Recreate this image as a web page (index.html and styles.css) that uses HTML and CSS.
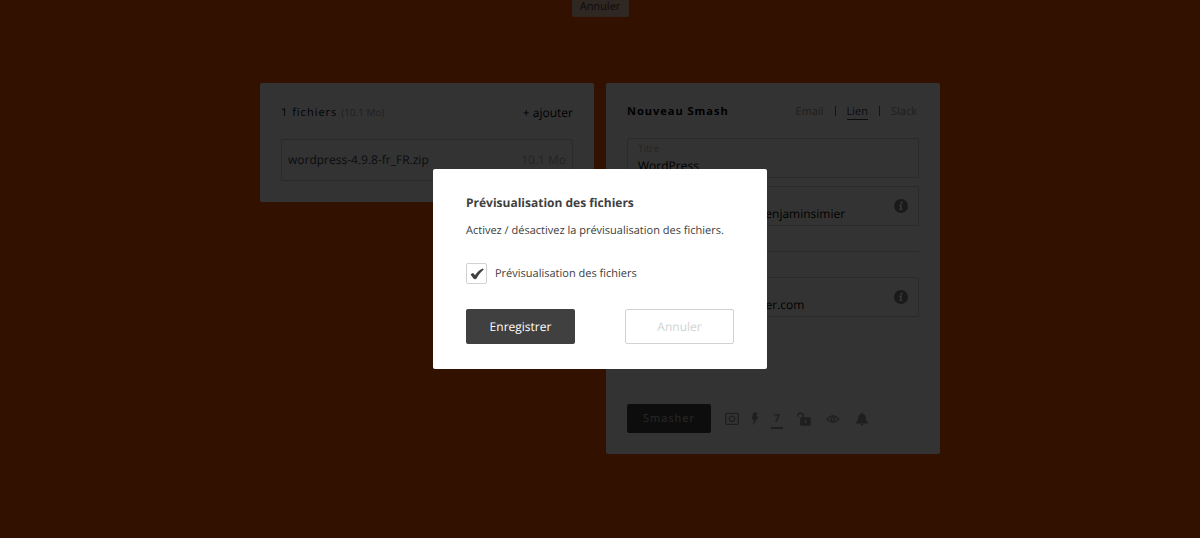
FILE: index.html
```html
<!DOCTYPE html>
<html lang="fr">
<head>
<meta charset="utf-8">
<title>Nouveau Smash</title>
<link rel="stylesheet" href="styles.css">
</head>
<body>
<div class="page">
  <header class="topbar"><button class="cancel-tab" type="button">Annuler</button></header>
  <main class="columns">
    <section class="card">
      <div class="card-head">
        <h2 class="files-title">1 fichiers <small class="files-size">(10.1 Mo)</small></h2>
        <button class="add" type="button">+ ajouter</button>
      </div>
      <div class="file"><span>wordpress-4.9.8-fr_FR.zip</span><span class="file-size">10.1 Mo</span></div>
    </section>
    <section class="card">
      <div class="card-head">
        <h2 class="smash-title">Nouveau Smash</h2>
        <nav class="tabs"><a class="tab" href="#email">Email</a><a class="tab" href="#lien"><span class="tab-active">Lien</span></a><a class="tab" href="#slack">Slack</a></nav>
      </div>
      <form class="fields">
        <div class="field">
          <div class="field-text"><label for="titre">Titre</label><input id="titre" type="text" value="WordPress"></div>
        </div>
        <div class="field">
          <div class="field-text"><label for="lien">Lien</label><input id="lien" type="text" value="app.fromsmash.com/benjaminsimier"></div>
          <svg class="info" viewBox="0 0 14 14"><circle cx="7" cy="7" r="7" fill="#808080"/><circle cx="7.500" cy="3.700" r="1.200" fill="#fff"/><path d="M5.200 5.600h3L7.500 9.800h1v1.300H5l.2-1.300h.5L6.200 6.900h-1z" fill="#fff"/></svg>
        </div>
        <hr class="rule">
        <div class="field">
          <div class="field-text"><label for="mail">Email</label><input id="mail" type="text" value="contact@benjaminsimier.com"></div>
          <svg class="info" viewBox="0 0 14 14"><circle cx="7" cy="7" r="7" fill="#808080"/><circle cx="7.500" cy="3.700" r="1.200" fill="#fff"/><path d="M5.200 5.600h3L7.500 9.800h1v1.300H5l.2-1.300h.5L6.200 6.900h-1z" fill="#fff"/></svg>
        </div>
      </form>
      <div class="actions">
        <button class="smasher" type="button">Smasher</button>
        <div class="tools">
          <button class="tool" type="button" aria-label="Image"><svg width="14" height="14" viewBox="0 0 14 14" fill="none" stroke="currentColor" stroke-width="1.300"><rect x=".7" y="1.300" width="12.600" height="11" rx="1.200"/><circle cx="7" cy="6.800" r="2.700"/></svg></button>
          <button class="tool" type="button" aria-label="Promotion"><svg width="8" height="14" viewBox="0 0 8 14" fill="currentColor"><path d="M2.400.5h4.200L5 4.600h2.700L1.700 13.800l1.200-6.300H.5z"/></svg></button>
          <button class="tool days" type="button">7</button>
        </div>
        <div class="tools tools-wide">
          <button class="tool" type="button" aria-label="Mot de passe"><svg width="14" height="14" viewBox="0 0 14 14" fill="none"><path d="M.9 4.800V3.500a2.600 2.600 0 0 1 5.200 0V6" stroke="currentColor" stroke-width="1.500"/><rect x="3.200" y="5.300" width="10.600" height="8.500" rx="1.200" fill="currentColor"/><path d="M8.500 7.800v3.500" stroke="#fff" stroke-width="1.300"/></svg></button>
          <button class="tool" type="button" aria-label="Prévisualisation"><svg width="14" height="14" viewBox="0 0 14 14" fill="none" stroke="currentColor"><path d="M.9 7q6.100-6.800 12.200 0q-6.100 6.800-12.200 0z" stroke-width="1.200"/><circle cx="7" cy="7" r="2.100" stroke-width="1.200"/><circle cx="7.200" cy="6.500" r=".4"/></svg></button>
          <button class="tool" type="button" aria-label="Notifications"><svg width="14" height="14" viewBox="0 0 14 14" fill="currentColor"><path d="M6.300.5h1.400v1C10 2 10.800 4 10.900 6c.1 2.500.9 3.600 2.300 4.600v.8H.8v-.8C2.200 9.600 3 8.500 3.100 6 3.200 4 4 2 6.300 1.500zM5.500 12.100h3a1.500 1.500 0 0 1-3 0z"/></svg></button>
        </div>
      </div>
    </section>
  </main>
</div>
<div class="overlay">
  <form class="modal" role="dialog" aria-labelledby="dlg-title">
    <h1 id="dlg-title" class="modal-title">Prévisualisation des fichiers</h1>
    <p class="modal-text">Activez / désactivez la prévisualisation des fichiers.</p>
    <div class="option">
      <span class="check"><input id="preview" type="checkbox" checked><svg width="14" height="14" viewBox="0 0 14 14"><path d="M.8 7.900C.8 6.400 3.200 5.700 3.900 6.700l1.100 1.600C7 5.400 9.300 2.900 12.700 1.500l1.100 1.100C10.700 5 8.600 8.100 6.700 11.300c-.7 1.100-2.200 1.200-2.900.5C2.700 10.500 2.200 9 .8 7.900z" fill="#404040"/></svg></span>
      <label for="preview">Prévisualisation des fichiers</label>
    </div>
    <div class="modal-actions">
      <button class="btn btn-dark" type="button">Enregistrer</button>
      <button class="btn btn-light" type="button">Annuler</button>
    </div>
  </form>
</div>
</body>
</html>
```
FILE: styles.css
```css
* { box-sizing: border-box; }
body { margin: 0; min-height: 100vh; background: #ff5500; color: #404040; font: 12px/20px "Open Sans", "Noto Sans", sans-serif; text-rendering: geometricPrecision; }
button, input { font: inherit; color: inherit; border: 0; padding: 0; background: none; text-rendering: inherit; }
button { cursor: pointer; }
h1, h2, p { margin: 0; }

.topbar { height: 83px; display: flex; justify-content: center; align-items: flex-start; }
.cancel-tab { width: 57px; height: 25px; margin-top: -8px; padding-top: 5px; border-radius: 2px; background: #e6c3aa; font-size: 11px; line-height: 20px; }
.columns { display: flex; justify-content: center; align-items: flex-start; gap: 12px; }
.card { width: 334px; padding: 19px 21px 21px; background: #fff; border-radius: 2px; }
.card-head { display: flex; justify-content: space-between; align-items: center; margin-bottom: 16px; color: #000; }
.files-title { font-size: 11px; font-weight: 400; letter-spacing: 1px; }
.files-size { font-size: 10px; letter-spacing: 0; color: #a0a0a0; }
.add { font-size: 12px; }
.file { display: flex; justify-content: space-between; align-items: center; height: 42px; padding: 0 6px; border: 1px solid #d2d2d2; border-radius: 2px; }
.file-size { color: #b4b4b4; }
.smash-title { font-size: 11px; font-weight: 700; letter-spacing: 1px; }
.tabs { display: flex; padding-right: 2px; font-size: 11px; line-height: 14px; }
.tab { color: #969696; text-decoration: none; }
.tab + .tab { margin-left: 11px; }
.tab + .tab::before { content: ""; display: inline-block; width: 1px; height: 10px; margin-right: 11px; background: #606060; vertical-align: -1px; }
.tab-active { color: #404040; box-shadow: 0 1px #404040; }

.fields { display: flex; flex-direction: column; gap: 8px; }
.field { display: flex; align-items: center; height: 40px; padding: 0 10px; border: 1px solid #d2d2d2; border-radius: 2px; }
.field-text { display: flex; flex-direction: column; flex: 1; min-width: 0; }
.field label { font-size: 10px; line-height: 16px; color: #b4b4b4; }
.field input { width: 100%; height: 20px; color: #000; }
.info { width: 14px; height: 14px; }
.rule { width: 100%; height: 1px; margin: 17px 0; border: 0; background: #d2d2d2; }

.actions { display: flex; align-items: center; gap: 14px; margin-top: 87px; }
.smasher { width: 84px; height: 29px; border-radius: 2px; background: #404040; color: #c8c8c8; font-size: 11px; letter-spacing: 1px; }
.tools { display: flex; align-items: center; gap: 12px; color: #9b9b9b; }
.tools-wide { gap: 15px; }
.tool { display: flex; justify-content: center; }
.days { width: 12px; margin-top: 2px; border-bottom: 2px solid; font-size: 11px; font-weight: 700; line-height: 16px; }

.overlay { position: fixed; inset: 0; display: flex; justify-content: center; align-items: center; background: rgba(0, 0, 0, .8); }
.modal { width: 334px; padding: 24px 33px 25px; border-radius: 2px; background: #fff; }
.modal-title { font-size: 12px; line-height: 20px; }
.modal-text { margin-top: 8px; font-size: 11px; line-height: 20px; }
.option { display: flex; align-items: center; gap: 8px; margin: 22px 0 25px; font-size: 11px; }
.check { display: grid; place-items: center; width: 21px; height: 21px; border: 1px solid #d2d2d2; border-radius: 2px; }
.check > * { grid-area: 1 / 1; }
.check input { appearance: none; width: 19px; height: 19px; margin: 0; }
.check svg { pointer-events: none; }
.check input:not(:checked) + svg { visibility: hidden; }
.modal-actions { display: flex; justify-content: space-between; }
.btn { width: 109px; height: 35px; border-radius: 2px; font-size: 12px; }
.btn-dark { background: #404040; color: #fff; }
.btn-light { border: 1px solid #d2d2d2; color: #d2d2d2; }
```
